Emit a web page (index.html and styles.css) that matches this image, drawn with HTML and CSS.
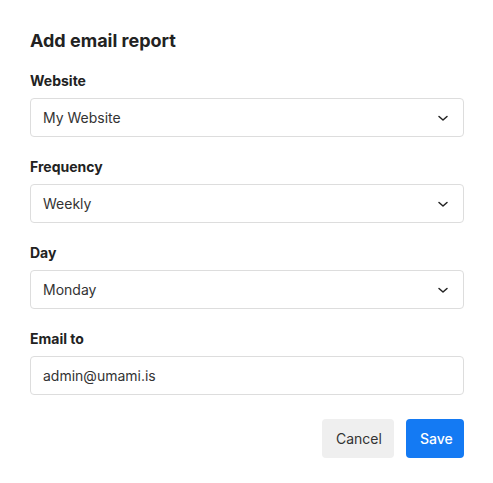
FILE: index.html
```html
<!DOCTYPE html>
<html>
<head>
<meta charset="utf-8">
<link rel="stylesheet" href="styles.css">
</head>
<body>
<div class="dialog">
  <h1 class="title">Add email report</h1>
  <div class="form">
    <div class="field">
      <div class="label">Website</div>
      <div class="select"><span>My Website</span><svg class="chev" width="12" height="12" viewBox="0 0 12 12"><path d="M2 4.5 L6 8 L10 4.5" fill="none" stroke="#222" stroke-width="1.5" stroke-linecap="round" stroke-linejoin="round"/></svg></div>
    </div>
    <div class="field">
      <div class="label">Frequency</div>
      <div class="select"><span>Weekly</span><svg class="chev" width="12" height="12" viewBox="0 0 12 12"><path d="M2 4.5 L6 8 L10 4.5" fill="none" stroke="#222" stroke-width="1.5" stroke-linecap="round" stroke-linejoin="round"/></svg></div>
    </div>
    <div class="field">
      <div class="label">Day</div>
      <div class="select"><span>Monday</span><svg class="chev" width="12" height="12" viewBox="0 0 12 12"><path d="M2 4.5 L6 8 L10 4.5" fill="none" stroke="#222" stroke-width="1.5" stroke-linecap="round" stroke-linejoin="round"/></svg></div>
    </div>
    <div class="field">
      <div class="label">Email to</div>
      <div class="input">admin@umami.is</div>
    </div>
  </div>
  <div class="buttons">
    <button class="btn cancel">Cancel</button>
    <button class="btn save">Save</button>
  </div>
</div>
</body>
</html>
```
FILE: styles.css
```css
html, body { margin: 0; background: #fff; }
body {
  font-family: Inter, "Noto Sans", sans-serif;
  color: #222;
}
.dialog {
  padding: 29px 29px 0 30px;
}
.title {
  margin: 0 0 18px;
  font-size: 18px;
  line-height: 24px;
  font-weight: 700;
  color: #222;
}
.form {
  display: flex;
  flex-direction: column;
  gap: 20px;
}
.field {
  display: flex;
  flex-direction: column;
  gap: 7px;
}
.label {
  font-size: 14px;
  line-height: 20px;
  font-weight: 700;
  color: #222;
}
.select, .input {
  box-sizing: border-box;
  height: 39px;
  border: 1px solid #ddd;
  border-radius: 4px;
  padding: 0 14px 0 12px;
  display: flex;
  align-items: center;
  justify-content: space-between;
  font-size: 14px;
  color: #333;
}
.buttons {
  display: flex;
  justify-content: flex-end;
  gap: 12px;
  margin-top: 24px;
}
.btn {
  font-family: inherit;
  font-size: 14px;
  height: 39px;
  border: none;
  border-radius: 4px;
  padding: 0 14px;
}
.cancel { background: #efefef; color: #333; width: 72px; }
.save { background: #147af3; color: #fff; width: 58px; font-weight: 500; }
```
